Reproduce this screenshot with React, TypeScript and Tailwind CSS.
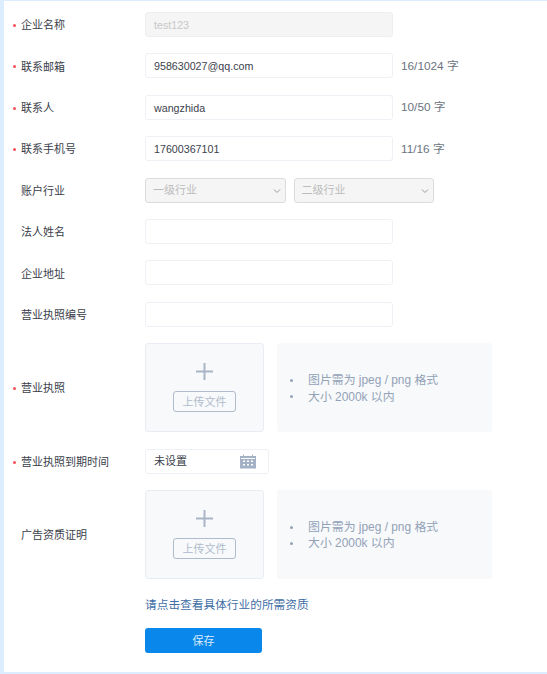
const font = "font-['Liberation_Sans','Noto_Sans_CJK_SC',sans-serif]";

function Row({ label, required, children }: { label: string; required?: boolean; children: React.ReactNode }) {
  return (
    <div className="flex items-center">
      <div className="w-[141px] shrink-0 pt-[2px] flex items-center text-[11px] text-[#3a404a]">
        <span className="w-[17px] pl-[9px] flex items-center">
          {required && <span className="w-[3px] h-[3px] rounded-full bg-[#f0505a]" />}
        </span>
        {label}
      </div>
      {children}
    </div>
  );
}

function Input({ value, disabled, hint }: { value?: string; disabled?: boolean; hint?: string }) {
  return (
    <>
      <div
        className={
          'w-[248px] h-[25px] px-[8px] pt-px flex items-center rounded-[3px] border text-[10.7px] ' +
          (disabled ? 'bg-[#f5f5f5] border-[#eeeeee] text-[#c8c8c8]' : 'bg-white border-[#eef0f5] text-[#3c424c]')
        }
      >
        {value}
      </div>
      {hint && <span className="ml-[8px] pt-[2px] text-[11.8px] text-[#6b7480]">{hint}</span>}
    </>
  );
}

function Select({ label }: { label: string }) {
  return (
    <div className="w-[140.5px] h-[25px] pl-[7px] pr-[4px] pt-px flex items-center justify-between rounded-[3px] border border-[#dcdcdc] bg-[#f5f5f5] text-[11px] text-[#bcbcbc]">
      {label}
      <svg width="8" height="6" viewBox="0 0 8 6" fill="none" stroke="#9a9a9a" strokeWidth="1">
        <path d="M1 1.5 4 4.5 7 1.5" />
      </svg>
    </div>
  );
}

function Upload() {
  return (
    <div className="flex gap-[13px]">
      <div className="w-[119px] h-[89px] flex flex-col items-center rounded-[3px] border border-[#e9edf3] bg-[#f7f9fb]">
        <svg className="mt-[19px]" width="17" height="17" viewBox="0 0 17 17" fill="#a9b5c6">
          <rect x="7.5" y="0" width="2" height="17" />
          <rect x="0" y="7.5" width="17" height="2" />
        </svg>
        <div className="mt-[11px] w-[63px] h-[21px] pt-px flex items-center justify-center rounded-[3px] border border-[#afbccd] text-[11px] text-[#b0bccb]">
          上传文件
        </div>
      </div>
      <div className="w-[215px] h-[89px] pt-[2px] flex flex-col justify-center rounded-[3px] bg-[#f7f9fb] pl-[13px] text-[11.9px] leading-[16.5px] text-[#93a2b6]">
        <div className="flex items-center">
          <span className="w-[3px] h-[3px] rounded-full bg-[#93a2b6] mr-[15px]" />
          图片需为 jpeg / png 格式
        </div>
        <div className="flex items-center">
          <span className="w-[3px] h-[3px] rounded-full bg-[#93a2b6] mr-[15px]" />
          大小 2000k 以内
        </div>
      </div>
    </div>
  );
}

export default function App() {
  return (
    <div className={`${font} w-[547px] h-[674px] overflow-hidden bg-[#dcedff] pl-[4px] pt-px pb-[2px]`}>
      <div className="h-full bg-white pt-[11px] flex flex-col">
        <div className="flex flex-col gap-[16.4px]">
          <Row label="企业名称" required>
            <Input value="test123" disabled />
          </Row>
          <Row label="联系邮箱" required>
            <Input value="958630027@qq.com" hint="16/1024 字" />
          </Row>
          <Row label="联系人" required>
            <Input value="wangzhida" hint="10/50 字" />
          </Row>
          <Row label="联系手机号" required>
            <Input value="17600367101" hint="11/16 字" />
          </Row>
          <Row label="账户行业">
            <div className="flex gap-[8px]">
              <Select label="一级行业" />
              <Select label="二级行业" />
            </div>
          </Row>
          <Row label="法人姓名">
            <Input />
          </Row>
          <Row label="企业地址">
            <Input />
          </Row>
          <Row label="营业执照编号">
            <Input />
          </Row>
          <Row label="营业执照" required>
            <Upload />
          </Row>
          <Row label="营业执照到期时间" required>
            <div className="w-[124px] h-[25px] pl-[8px] pr-[12px] pt-px flex items-center justify-between rounded-[3px] border border-[#eef0f5] bg-white text-[11px] text-[#3c424c]">
              未设置
              <svg width="16" height="15" viewBox="0 0 16 14" fill="#a3b0c6">
                <path d="M3 0h1v1.5h8V0h1v1.5h3V14H0V1.5h3z" />
                <g fill="#fff">
                  <rect x="1" y="3.5" width="14" height="1" />
                  <rect x="3" y="6" width="2" height="1.5" />
                  <rect x="7" y="6" width="2" height="1.5" />
                  <rect x="11" y="6" width="2" height="1.5" />
                  <rect x="3" y="9.5" width="2" height="1.5" />
                  <rect x="7" y="9.5" width="2" height="1.5" />
                  <rect x="11" y="9.5" width="2" height="1.5" />
                </g>
              </svg>
            </div>
          </Row>
          <Row label="广告资质证明">
            <Upload />
          </Row>
        </div>
        <div className="ml-[141px] mt-[18px] text-[11.7px] leading-[16px] text-[#3f6ea6]">请点击查看具体行业的所需资质</div>
        <div className="ml-[141px] mt-[15px] w-[117px] h-[25px] pt-px flex items-center justify-center rounded-[3px] bg-[#0a87ea] text-[11px] text-[#d9ecfc]">
          保存
        </div>
      </div>
    </div>
  );
}
